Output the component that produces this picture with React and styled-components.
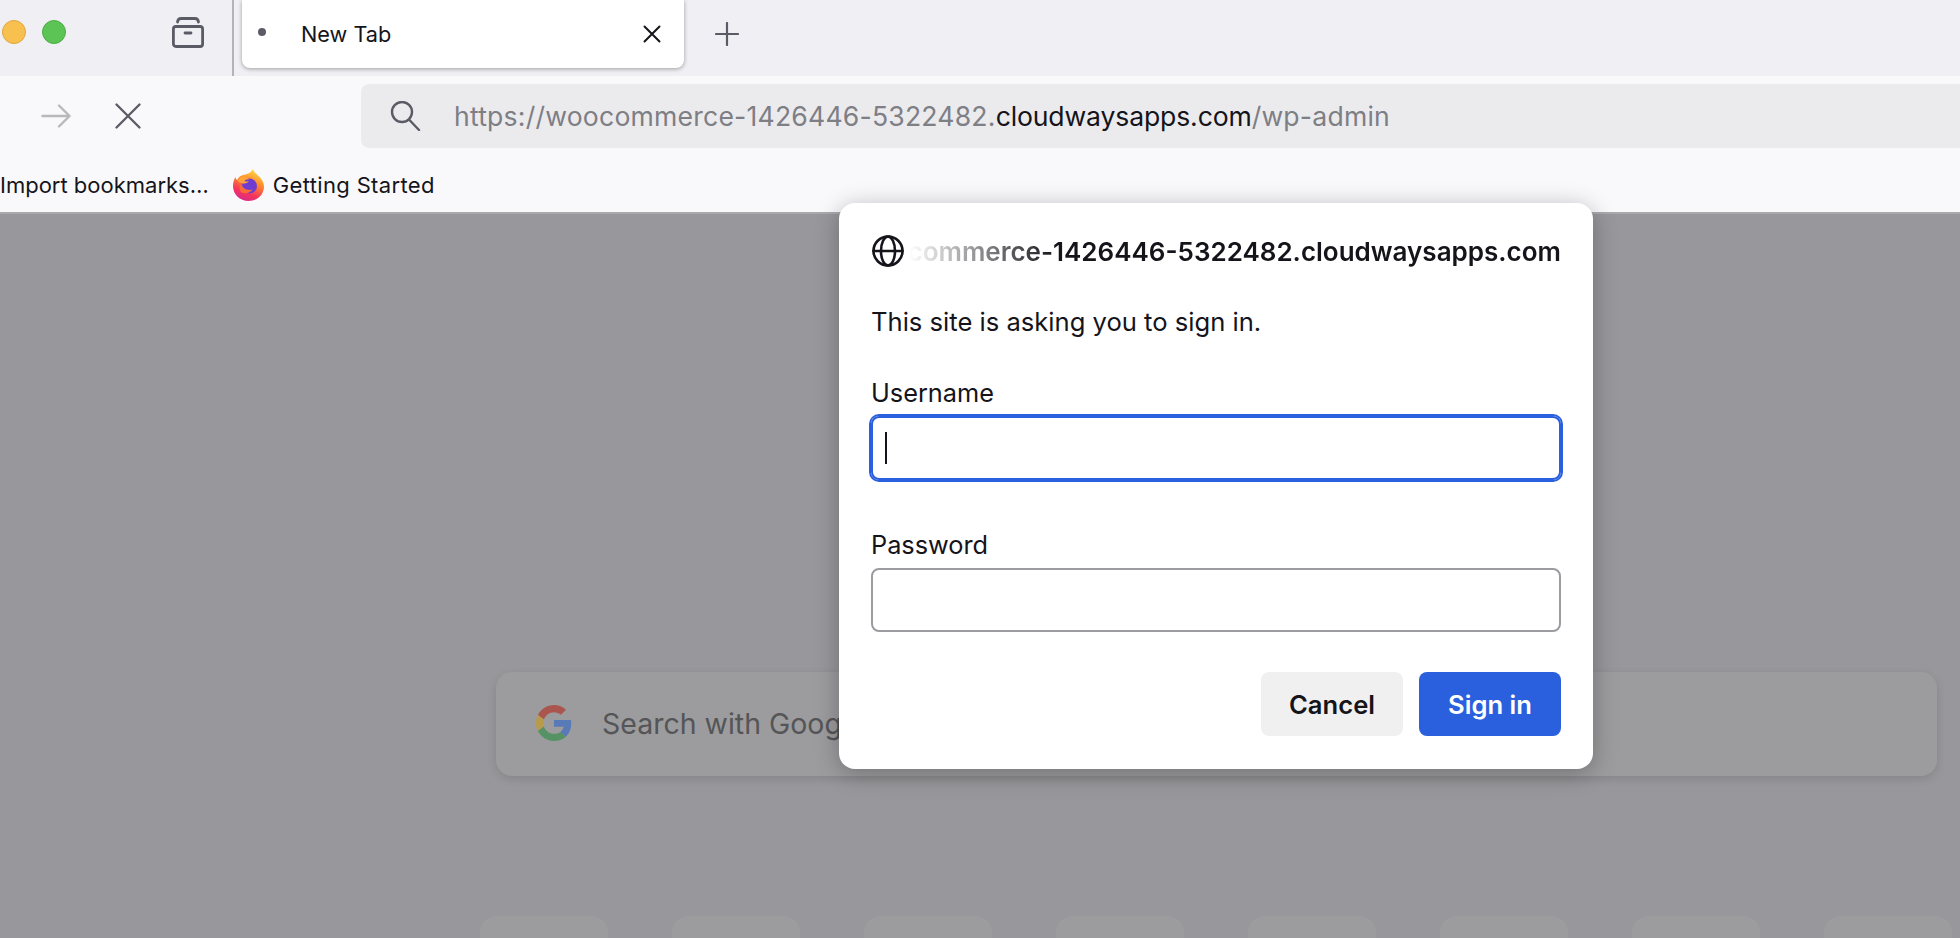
import styled, { createGlobalStyle } from "styled-components";

const Global = createGlobalStyle`
  html, body {
    margin: 0;
    height: 938px;
    overflow: hidden;
    background: #98989c;
    font-family: Inter, "Liberation Sans", sans-serif;
  }
  * { box-sizing: border-box; }
`;

const Window = styled.div`
  width: 1960px;
  height: 938px;
  display: flex;
  flex-direction: column;
  overflow: hidden;
`;

const TabBar = styled.div`
  height: 76px;
  flex: none;
  display: flex;
  background: #f0f0f4;
`;

const Lights = styled.div`
  display: flex;
  gap: 16px;
  padding: 20px 0 0 2px;
  width: 172px;
`;

const Light = styled.span`
  width: 24px;
  height: 24px;
  border-radius: 50%;
  background: ${(p) => p.$color};
  border: 1px solid ${(p) => p.$edge};
`;

const ArchiveWrap = styled.div`
  width: 62px;
  height: 76px;
  border-right: 2px solid #b4b4b8;
  padding-top: 17px;
`;

const Tab = styled.div`
  width: 442px;
  height: 68px;
  margin-left: 8px;
  display: flex;
  align-items: center;
  padding: 0 23px 0 16px;
  background: #fff;
  border-radius: 0 0 8px 8px;
  box-shadow: 0 1px 4px rgba(0, 0, 0, 0.35);
  color: #15141a;
  font-size: 21.7px;
`;

const TabDot = styled.span`
  width: 8px;
  height: 8px;
  border-radius: 50%;
  background: #5b5b66;
  margin: -4px 35px 0 0;
`;

const TabTitle = styled.span`
  flex: 1;
  margin-top: -1px;
`;

const NewTab = styled.div`
  margin-left: 31px;
  padding-top: 22px;
`;

const Toolbar = styled.div`
  height: 80px;
  flex: none;
  display: flex;
  align-items: flex-start;
  background: #f9f9fb;
  padding: 8px 0 0 41px;
`;

const NavIcons = styled.div`
  display: flex;
  gap: 44px;
  width: 320px;
  height: 64px;
  align-items: center;
`;

const UrlBar = styled.div`
  flex: 1;
  height: 64px;
  display: flex;
  align-items: center;
  gap: 32px;
  padding-left: 29px;
  background: #ebebee;
  border-radius: 8px 0 0 8px;
  font-size: 26.6px;
  letter-spacing: 0.2px;
  color: #7e7e85;
  white-space: nowrap;
`;

const UrlHost = styled.span`
  color: #15141a;
  letter-spacing: -0.15px;
`;

const Bookmarks = styled.div`
  height: 56px;
  flex: none;
  display: flex;
  align-items: center;
  padding-top: 2px;
  background: #f9f9fb;
  color: #15141a;
  font-size: 22px;
`;

const Bookmark = styled.div`
  display: flex;
  align-items: center;
  gap: 9px;
  margin-right: 24px;
  letter-spacing: ${(p) => (p.$wide ? "0.35px" : "0")};
`;

const Content = styled.div`
  flex: 1;
  position: relative;
  background: #98989c;
  border-top: 2px solid #a9a9ad;
  padding-top: 458px;
`;

const SearchBox = styled.div`
  width: 1441px;
  height: 104px;
  margin-left: 496px;
  display: flex;
  align-items: center;
  gap: 30px;
  padding: 0 0 2px 40px;
  background: #9c9c9e;
  border-radius: 16px;
  box-shadow: 0 3px 10px rgba(0, 0, 0, 0.12);
  color: #555558;
  font-size: 28.5px;
`;

const Tiles = styled.div`
  display: flex;
  gap: 64px;
  margin: 140px 0 0 480px;
`;

const Tile = styled.div`
  width: 128px;
  height: 128px;
  flex: none;
  border-radius: 16px;
  background: #9c9c9e;
`;

const Dialog = styled.div`
  position: absolute;
  left: 839px;
  top: -11px;
  width: 754px;
  height: 566px;
  padding: 30px 32px 0;
  background: #fff;
  border-radius: 16px;
  box-shadow: 0 4px 24px rgba(0, 0, 0, 0.28);
  color: #15141a;
  font-size: 25.6px;
`;

const DialogHead = styled.div`
  display: flex;
  align-items: center;
  height: 36px;
  padding-left: 1px;
`;

const Host = styled.div`
  flex: 1;
  min-width: 0;
  margin-left: 1px;
  white-space: nowrap;
  text-align: right;
  font-weight: 600;
  font-size: 26px;
  -webkit-mask-image: linear-gradient(90deg, transparent 4px, #000 150px);
  mask-image: linear-gradient(90deg, transparent 4px, #000 150px);
`;

const Prompt = styled.p`
  margin: 35px 0 0;
  line-height: 36px;
`;

const Label = styled.label`
  display: block;
  margin-top: ${(p) => p.$top}px;
  line-height: 36px;
  font-size: 25.3px;
`;

const Field = styled.div`
  height: 64px;
  margin-top: 5px;
  display: flex;
  align-items: center;
  padding-left: 12px;
  border-radius: 8px;
  border: 2px solid ${(p) => (p.$focus ? "#2a60de" : "#9c9ca0")};
  box-shadow: ${(p) => (p.$focus ? "0 0 0 2px #2a60de" : "none")};
`;

const Caret = styled.span`
  width: 2px;
  height: 32px;
  background: #15141a;
`;

const Actions = styled.div`
  display: flex;
  justify-content: flex-end;
  gap: 16px;
  margin-top: 40px;
`;

const Button = styled.div`
  width: 142px;
  height: 64px;
  display: flex;
  align-items: center;
  justify-content: center;
  border-radius: 8px;
  font-weight: 600;
  background: ${(p) => (p.$primary ? "#2a60de" : "#f0f0f0")};
  color: ${(p) => (p.$primary ? "#fff" : "#15141a")};
`;

const Stroke = styled.svg`
  display: block;
  flex: none;
  fill: none;
  stroke: ${(p) => p.$stroke || "#5b5b66"};
  stroke-linecap: round;
  stroke-linejoin: round;
`;

function FirefoxLogo() {
  return (
    <svg width="31" height="32" viewBox="0 0 31 32" style={{ flex: "none" }}>
      <defs>
        <linearGradient id="ffBody" x1="0.75" y1="0" x2="0.35" y2="1">
          <stop offset="0" stopColor="#ffe14a" />
          <stop offset="0.4" stopColor="#ff8a2a" />
          <stop offset="0.75" stopColor="#f5355c" />
          <stop offset="1" stopColor="#d92a8a" />
        </linearGradient>
      </defs>
      <path
        d="M20 0c.5 3.500 4.500 5.500 7.500 9 2.500 3 3.500 6 3.500 8.500C31 25.500 24.500 32 15.500 32 7 32 0 25.500 0 17c0-3.500 1-6.500 2.500-9 .2 1.500.8 2.500 1.700 3C5.500 8 8 6.500 10.500 6c3.500-.8 7.500-2 9.500-6z"
        fill="url(#ffBody)"
      />
      <circle cx="16.500" cy="17" r="7.500" fill="#6f3cd0" />
      <path d="M9.500 7.500c2.500 0 5 1 6.500 3-2.500-.3-4 .3-5 1.500 1 .5 3 .5 5 .5-1.500 1.500-4 2-5.500 2-2 0-4-1-6-2.500 1-2 3-4 5-4.500z" fill="#ffa436" />
      <path d="M8 15c1.500 4 6 7 11.500 5.500-2 3-7 5-11 3-2-2-2.500-5.500-.5-8.500z" fill="#ff6a3a" />
    </svg>
  );
}

function GoogleLogo() {
  return (
    <svg width="36" height="36" viewBox="0 0 48 48" style={{ flex: "none", opacity: 0.72 }}>
      <path fill="#b03a2e" d="M24 9.500c3.540 0 6.710 1.220 9.210 3.600l6.850-6.850C35.900 2.380 30.470 0 24 0 14.620 0 6.510 5.380 2.560 13.220l7.980 6.190C12.430 13.720 17.740 9.500 24 9.500z" />
      <path fill="#3f6ec0" d="M46.980 24.550c0-1.570-.15-3.090-.38-4.550H24v9.020h12.940c-.58 2.960-2.260 5.480-4.780 7.180l7.730 6c4.510-4.180 7.090-10.360 7.090-17.650z" />
      <path fill="#c49a2c" d="M10.530 28.590c-.48-1.450-.76-2.990-.76-4.590s.27-3.140.76-4.590l-7.980-6.190C.92 16.460 0 20.120 0 24c0 3.880.92 7.540 2.560 10.780l7.970-6.190z" />
      <path fill="#3c8f4e" d="M24 48c6.480 0 11.930-2.130 15.890-5.810l-7.730-6c-2.150 1.450-4.920 2.300-8.160 2.300-6.260 0-11.570-4.220-13.470-9.910l-7.980 6.190C6.510 42.620 14.620 48 24 48z" />
    </svg>
  );
}

export default function App() {
  return (
    <Window>
      <Global />
      <TabBar>
        <Lights>
          <Light $color="#f7c04f" $edge="#e0a63c" />
          <Light $color="#5cc455" $edge="#4eab48" />
        </Lights>
        <ArchiveWrap>
          <Stroke width="32" height="31" viewBox="0 0 32 31" strokeWidth="2.800">
            <path d="M5.500 5c.3-2.500 1.500-3.500 3.500-3.500h14c2 0 3.200 1 3.500 3.500" />
            <rect x="1.400" y="9.500" width="29.200" height="20" rx="2.500" />
            <path d="M13 16h6" />
          </Stroke>
        </ArchiveWrap>
        <Tab>
          <TabDot />
          <TabTitle>New Tab</TabTitle>
          <Stroke width="18" height="18" viewBox="0 0 18 18" strokeWidth="2" $stroke="#15141a">
            <path d="M1.500 1.500l15 15M16.500 1.500l-15 15" />
          </Stroke>
        </Tab>
        <NewTab>
          <Stroke width="24" height="24" viewBox="0 0 24 24" strokeWidth="2.200">
            <path d="M12 1v22M1 12h22" />
          </Stroke>
        </NewTab>
      </TabBar>
      <Toolbar>
        <NavIcons>
          <Stroke width="30" height="24" viewBox="0 0 30 24" strokeWidth="2.400" $stroke="#b9b9bd">
            <path d="M1.500 12h27M18 1.500L28.500 12 18 22.500" />
          </Stroke>
          <Stroke width="26" height="26" viewBox="0 0 26 26" strokeWidth="2.300">
            <path d="M1.500 1.500l23 23M24.500 1.500l-23 23" />
          </Stroke>
        </NavIcons>
        <UrlBar>
          <Stroke width="32" height="30" viewBox="0 0 32 30" strokeWidth="2.400">
            <circle cx="12" cy="11" r="10" />
            <path d="M19 18.500L29 29" />
          </Stroke>
          <span>
            https://woocommerce-1426446-5322482.<UrlHost>cloudwaysapps.com</UrlHost>/wp-admin
          </span>
        </UrlBar>
      </Toolbar>
      <Bookmarks>
        <Bookmark>Import bookmarks…</Bookmark>
        <Bookmark $wide>
          <FirefoxLogo />
          Getting Started
        </Bookmark>
      </Bookmarks>
      <Content>
        <SearchBox>
          <GoogleLogo />
          Search with Google or enter address
        </SearchBox>
        <Tiles>
          {Array.from({ length: 8 }).map((_, i) => (
            <Tile key={i} />
          ))}
        </Tiles>
        <Dialog>
          <DialogHead>
            <Stroke width="32" height="32" viewBox="0 0 32 32" strokeWidth="2.600" $stroke="#15141a">
              <circle cx="16" cy="16" r="14.500" />
              <ellipse cx="16" cy="16" rx="7" ry="14.500" />
              <path d="M1.500 16h29" />
            </Stroke>
            <Host>commerce-1426446-5322482.cloudwaysapps.com</Host>
          </DialogHead>
          <Prompt>This site is asking you to sign in.</Prompt>
          <Label $top={35}>Username</Label>
          <Field $focus>
            <Caret />
          </Field>
          <Label $top={47}>Password</Label>
          <Field />
          <Actions>
            <Button>Cancel</Button>
            <Button $primary>Sign in</Button>
          </Actions>
        </Dialog>
      </Content>
    </Window>
  );
}
